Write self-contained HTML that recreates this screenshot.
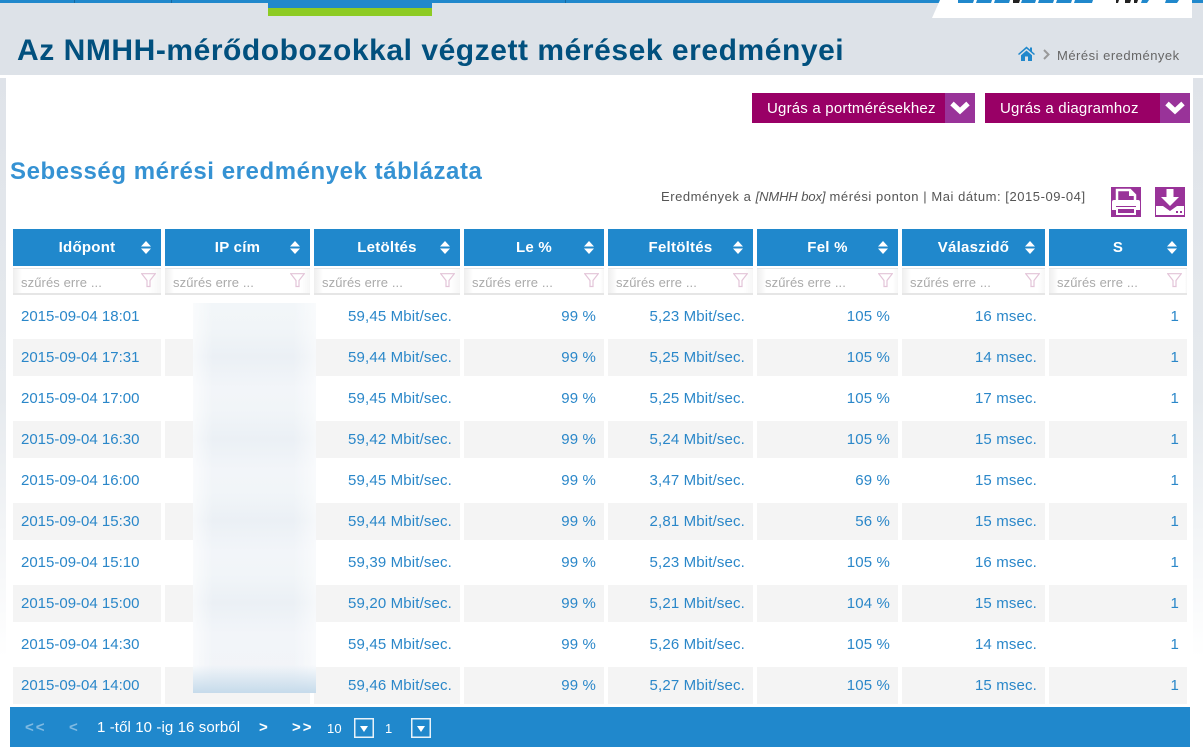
<!DOCTYPE html>
<html lang="hu"><head><meta charset="utf-8"><title>Mérési eredmények</title>
<style>
*{box-sizing:border-box}
html,body{margin:0;padding:0;background:#fff;width:1203px;height:754px;overflow:hidden}
body{position:relative;font-family:"Liberation Sans",sans-serif;font-size:15px;color:#2a87c9}
.a{position:absolute}
.t{position:absolute;white-space:nowrap}
#grid{position:absolute;left:13px;top:229px;display:grid;grid-template-columns:148px 145px 146px 140px 145px 141px 143px 138px;grid-template-rows:37px 24px repeat(10,37px);column-gap:4px;row-gap:4px}
#grid>div{line-height:38px;padding:0 8px;text-align:right;white-space:nowrap;letter-spacing:.15px;height:37px}
#grid>div.h{background:#2088cc;color:#fff;font-weight:bold;text-align:center;position:relative;padding:0;letter-spacing:.25px;line-height:38px}
#grid>div.h svg{position:absolute;right:10px;top:12px}
#grid>div.f{height:27px;margin-top:-2px;border-top:1px solid #e6e6e6;border-bottom:2px solid #e6e6e6;background:linear-gradient(90deg,#eee,#fff 9px,#fff 136px,#f6f6f6);color:#aaa;font-size:13px;line-height:27px;text-align:left;position:relative;letter-spacing:.1px}
#grid>div.f svg{position:absolute;right:5px;top:4px}
#grid>div.l{text-align:left;letter-spacing:0}
#grid>div.s{background:#f4f4f4}
.btn{position:absolute;top:93px;height:30px;background:#990066;color:#fff;line-height:31px;letter-spacing:.2px}
.btn span{position:absolute;left:15px}
.btn i{position:absolute;right:0;top:0;width:30px;height:30px;background:#993399}
</style></head><body>
<div class="a" style="left:0;top:0;width:1203px;height:75px;background:#dde2e8"></div>
<div class="a" style="left:0;top:0;width:1203px;height:3px;background:#2088cc"></div>
<div class="a" style="left:74px;top:0;width:1px;height:3px;background:#16689f"></div>
<div class="a" style="left:171px;top:0;width:1px;height:3px;background:#16689f"></div>
<div class="a" style="left:565px;top:0;width:1px;height:3px;background:#16689f"></div>
<div class="a" style="left:268px;top:0;width:164px;height:8px;background:#2088cc"></div>
<div class="a" style="left:268px;top:8px;width:164px;height:8px;background:#8dcb23"></div>
<svg class="a" style="left:930px;top:0" width="265" height="18" viewBox="0 0 265 18">
<path d="M10 0H262V18H2Z" fill="#fff"/>
<path d="M28 0H44L43 3H28ZM47 0H62L61 3H46ZM65 0H80L79 3H64ZM92 0H106L105 3H91ZM109 0H124L123 3H108ZM127 0H142L141 3H126ZM145 0H163L162 3H144ZM212 0H219L217 3H211ZM236 0H249L247 3H235Z" fill="#2088cc"/>
<path d="M83 0H90L89 3H83ZM186 0H189L188 3H186ZM195 0H201L200 3H195ZM204 0H208L207 3H204Z" fill="#222"/>
</svg>
<div class="t" style="left:17px;top:33px;font-size:30px;line-height:36px;font-weight:bold;color:#01507e;letter-spacing:.55px">Az NMHH-mérődobozokkal végzett mérések eredményei</div>
<svg class="a" style="left:1018px;top:46px" width="17" height="15" viewBox="0 0 17 15"><path d="M0 8L8.5 .5 12 3.6V1.5H14V5.4L17 8 16 9 8.5 2.6 1 9ZM3 9.2L8.5 4.5 14 9.2V15H10V10.5H7V15H3Z" fill="#2088cc"/></svg>
<svg class="a" style="left:1043px;top:49px" width="7" height="11" viewBox="0 0 7 11"><path d="M1 1L5.5 5.5 1 10" fill="none" stroke="#999" stroke-width="2"/></svg>
<div class="t" style="left:1057px;top:47px;font-size:13px;line-height:17px;color:#666;letter-spacing:.5px">Mérési eredmények</div>

<div class="a" style="left:0;top:78px;width:6px;height:580px;background:linear-gradient(#dfe3e9,#e6eaee 55%,#fff)"></div>
<div class="a" style="left:1193px;top:78px;width:10px;height:580px;background:linear-gradient(#dfe3e9,#e6eaee 55%,#fff)"></div>

<div class="btn" style="left:752px;width:223px"><span>Ugrás a portmérésekhez</span><i><svg width="30" height="30" viewBox="0 0 30 30"><path d="M7 10.5L15 18 23 10.5" fill="none" stroke="#fff" stroke-width="5"/></svg></i></div>
<div class="btn" style="left:985px;width:205px"><span>Ugrás a diagramhoz</span><i><svg width="30" height="30" viewBox="0 0 30 30"><path d="M7 10.5L15 18 23 10.5" fill="none" stroke="#fff" stroke-width="5"/></svg></i></div>

<div class="t" style="left:10px;top:157px;font-size:24px;line-height:30px;font-weight:bold;color:#3592d3;letter-spacing:.56px">Sebesség mérési eredmények táblázata</div>
<div class="t" style="left:661px;top:188px;font-size:13px;line-height:17px;color:#555;letter-spacing:.55px">Eredmények a <em style="letter-spacing:-.1px">[NMHH box]</em> mérési ponton | Mai dátum: [2015-09-04]</div>

<svg class="a" style="left:1111px;top:187px" width="30" height="30" viewBox="0 0 30 30"><rect width="30" height="30" fill="#993399"/><path d="M6 13V3H19L24 8V13" fill="none" stroke="#fff" stroke-width="2.5"/><path d="M18 3V9H24" fill="#fff"/><path d="M3 13H27A2 2 0 0 1 29 15V23H25V19H5V23H1V15A2 2 0 0 1 3 13Z" fill="#fff"/><rect x="6" y="21" width="18" height="6" fill="none" stroke="#fff" stroke-width="2"/></svg>
<svg class="a" style="left:1155px;top:187px" width="30" height="30" viewBox="0 0 30 30"><rect width="30" height="30" fill="#993399"/><path d="M11.5 2H18.5V10H24L15 19 6 10H11.5Z" fill="#fff"/><path d="M1 19H8L15 24 22 19H29V28H1Z" fill="#fff"/><rect x="21" y="24" width="2" height="2" fill="#993399"/><rect x="25" y="24" width="2" height="2" fill="#993399"/></svg>

<div id="grid">
<div class="h">Időpont<svg width="10" height="13" viewBox="0 0 10 13"><path d="M5 0L10 5.5H0ZM0 7.5H10L5 13Z" fill="#fff"/></svg></div>
<div class="h">IP cím<svg width="10" height="13" viewBox="0 0 10 13"><path d="M5 0L10 5.5H0ZM0 7.5H10L5 13Z" fill="#fff"/></svg></div>
<div class="h">Letöltés<svg width="10" height="13" viewBox="0 0 10 13"><path d="M5 0L10 5.5H0ZM0 7.5H10L5 13Z" fill="#fff"/></svg></div>
<div class="h">Le %<svg width="10" height="13" viewBox="0 0 10 13"><path d="M5 0L10 5.5H0ZM0 7.5H10L5 13Z" fill="#fff"/></svg></div>
<div class="h">Feltöltés<svg width="10" height="13" viewBox="0 0 10 13"><path d="M5 0L10 5.5H0ZM0 7.5H10L5 13Z" fill="#fff"/></svg></div>
<div class="h">Fel %<svg width="10" height="13" viewBox="0 0 10 13"><path d="M5 0L10 5.5H0ZM0 7.5H10L5 13Z" fill="#fff"/></svg></div>
<div class="h">Válaszidő<svg width="10" height="13" viewBox="0 0 10 13"><path d="M5 0L10 5.5H0ZM0 7.5H10L5 13Z" fill="#fff"/></svg></div>
<div class="h">S<svg width="10" height="13" viewBox="0 0 10 13"><path d="M5 0L10 5.5H0ZM0 7.5H10L5 13Z" fill="#fff"/></svg></div>

<div class="f">szűrés erre ...<svg width="15" height="15" viewBox="0 0 15 15"><path d="M.7 .7H14.3L9 7.5V13.5H6V7.5Z" fill="none" stroke="#e3c4d8" stroke-width="1.2"/></svg></div>
<div class="f">szűrés erre ...<svg width="15" height="15" viewBox="0 0 15 15"><path d="M.7 .7H14.3L9 7.5V13.5H6V7.5Z" fill="none" stroke="#e3c4d8" stroke-width="1.2"/></svg></div>
<div class="f">szűrés erre ...<svg width="15" height="15" viewBox="0 0 15 15"><path d="M.7 .7H14.3L9 7.5V13.5H6V7.5Z" fill="none" stroke="#e3c4d8" stroke-width="1.2"/></svg></div>
<div class="f">szűrés erre ...<svg width="15" height="15" viewBox="0 0 15 15"><path d="M.7 .7H14.3L9 7.5V13.5H6V7.5Z" fill="none" stroke="#e3c4d8" stroke-width="1.2"/></svg></div>
<div class="f">szűrés erre ...<svg width="15" height="15" viewBox="0 0 15 15"><path d="M.7 .7H14.3L9 7.5V13.5H6V7.5Z" fill="none" stroke="#e3c4d8" stroke-width="1.2"/></svg></div>
<div class="f">szűrés erre ...<svg width="15" height="15" viewBox="0 0 15 15"><path d="M.7 .7H14.3L9 7.5V13.5H6V7.5Z" fill="none" stroke="#e3c4d8" stroke-width="1.2"/></svg></div>
<div class="f">szűrés erre ...<svg width="15" height="15" viewBox="0 0 15 15"><path d="M.7 .7H14.3L9 7.5V13.5H6V7.5Z" fill="none" stroke="#e3c4d8" stroke-width="1.2"/></svg></div>
<div class="f">szűrés erre ...<svg width="15" height="15" viewBox="0 0 15 15"><path d="M.7 .7H14.3L9 7.5V13.5H6V7.5Z" fill="none" stroke="#e3c4d8" stroke-width="1.2"/></svg></div>

<div class="l">2015-09-04 18:01</div><div></div><div>59,45 Mbit/sec.</div><div>99 %</div><div>5,23 Mbit/sec.</div><div>105 %</div><div>16 msec.</div><div>1</div>
<div class="l s">2015-09-04 17:31</div><div class="s"></div><div class="s">59,44 Mbit/sec.</div><div class="s">99 %</div><div class="s">5,25 Mbit/sec.</div><div class="s">105 %</div><div class="s">14 msec.</div><div class="s">1</div>
<div class="l">2015-09-04 17:00</div><div></div><div>59,45 Mbit/sec.</div><div>99 %</div><div>5,25 Mbit/sec.</div><div>105 %</div><div>17 msec.</div><div>1</div>
<div class="l s">2015-09-04 16:30</div><div class="s"></div><div class="s">59,42 Mbit/sec.</div><div class="s">99 %</div><div class="s">5,24 Mbit/sec.</div><div class="s">105 %</div><div class="s">15 msec.</div><div class="s">1</div>
<div class="l">2015-09-04 16:00</div><div></div><div>59,45 Mbit/sec.</div><div>99 %</div><div>3,47 Mbit/sec.</div><div>69 %</div><div>15 msec.</div><div>1</div>
<div class="l s">2015-09-04 15:30</div><div class="s"></div><div class="s">59,44 Mbit/sec.</div><div class="s">99 %</div><div class="s">2,81 Mbit/sec.</div><div class="s">56 %</div><div class="s">15 msec.</div><div class="s">1</div>
<div class="l">2015-09-04 15:10</div><div></div><div>59,39 Mbit/sec.</div><div>99 %</div><div>5,23 Mbit/sec.</div><div>105 %</div><div>16 msec.</div><div>1</div>
<div class="l s">2015-09-04 15:00</div><div class="s"></div><div class="s">59,20 Mbit/sec.</div><div class="s">99 %</div><div class="s">5,21 Mbit/sec.</div><div class="s">104 %</div><div class="s">15 msec.</div><div class="s">1</div>
<div class="l">2015-09-04 14:30</div><div></div><div>59,45 Mbit/sec.</div><div>99 %</div><div>5,26 Mbit/sec.</div><div>105 %</div><div>14 msec.</div><div>1</div>
<div class="l s">2015-09-04 14:00</div><div class="s"></div><div class="s">59,46 Mbit/sec.</div><div class="s">99 %</div><div class="s">5,27 Mbit/sec.</div><div class="s">105 %</div><div class="s">15 msec.</div><div class="s">1</div>
</div>

<div class="a" style="left:193px;top:303px;width:123px;height:390px;background:linear-gradient(rgba(198,219,235,0) 362px,rgba(198,219,235,1) 390px),linear-gradient(90deg,rgba(255,255,255,.6),rgba(255,255,255,0) 20px,rgba(255,255,255,0) 100px,rgba(255,255,255,.55)),linear-gradient(#f2f6f9 0,#f1f5f8 25px,#ebf0f5 54px,#f2f5f9 85px,#f1f5f8 107px,#ebf0f5 136px,#f2f5f9 167px,#f1f5f8 189px,#ebf0f5 218px,#f2f5f9 249px,#f1f5f8 271px,#ebf0f5 300px,#f2f5f9 331px,#f1f4f8 390px)"></div>

<div class="a" style="left:10px;top:707px;width:1180px;height:40px;background:#2088cc"></div>
<div class="t" style="left:25px;top:719px;font-size:15px;line-height:18px;color:#7fbae2;font-weight:bold;letter-spacing:2px">&lt;&lt;</div>
<div class="t" style="left:69px;top:719px;font-size:15px;line-height:18px;color:#7fbae2;font-weight:bold">&lt;</div>
<div class="t" style="left:97px;top:719px;font-size:15px;line-height:18px;color:#fff;letter-spacing:.1px">1 -től 10 -ig 16 sorból</div>
<div class="t" style="left:259px;top:719px;font-size:15px;line-height:18px;color:#fff;font-weight:bold">&gt;</div>
<div class="t" style="left:292px;top:719px;font-size:15px;line-height:18px;color:#fff;font-weight:bold;letter-spacing:2px">&gt;&gt;</div>
<div class="t" style="left:327px;top:720px;font-size:13px;line-height:17px;color:#fff;letter-spacing:.2px">10</div>
<svg class="a" style="left:354px;top:718px" width="20" height="20" viewBox="0 0 20 20"><rect x=".75" y=".75" width="18.5" height="18.5" fill="none" stroke="#e8f2f9" stroke-width="1.5"/><path d="M6 8H14L10 14Z" fill="#fff"/></svg>
<div class="t" style="left:385px;top:720px;font-size:13px;line-height:17px;color:#fff">1</div>
<svg class="a" style="left:411px;top:718px" width="20" height="20" viewBox="0 0 20 20"><rect x=".75" y=".75" width="18.5" height="18.5" fill="none" stroke="#e8f2f9" stroke-width="1.5"/><path d="M6 8H14L10 14Z" fill="#fff"/></svg>
</body></html>
